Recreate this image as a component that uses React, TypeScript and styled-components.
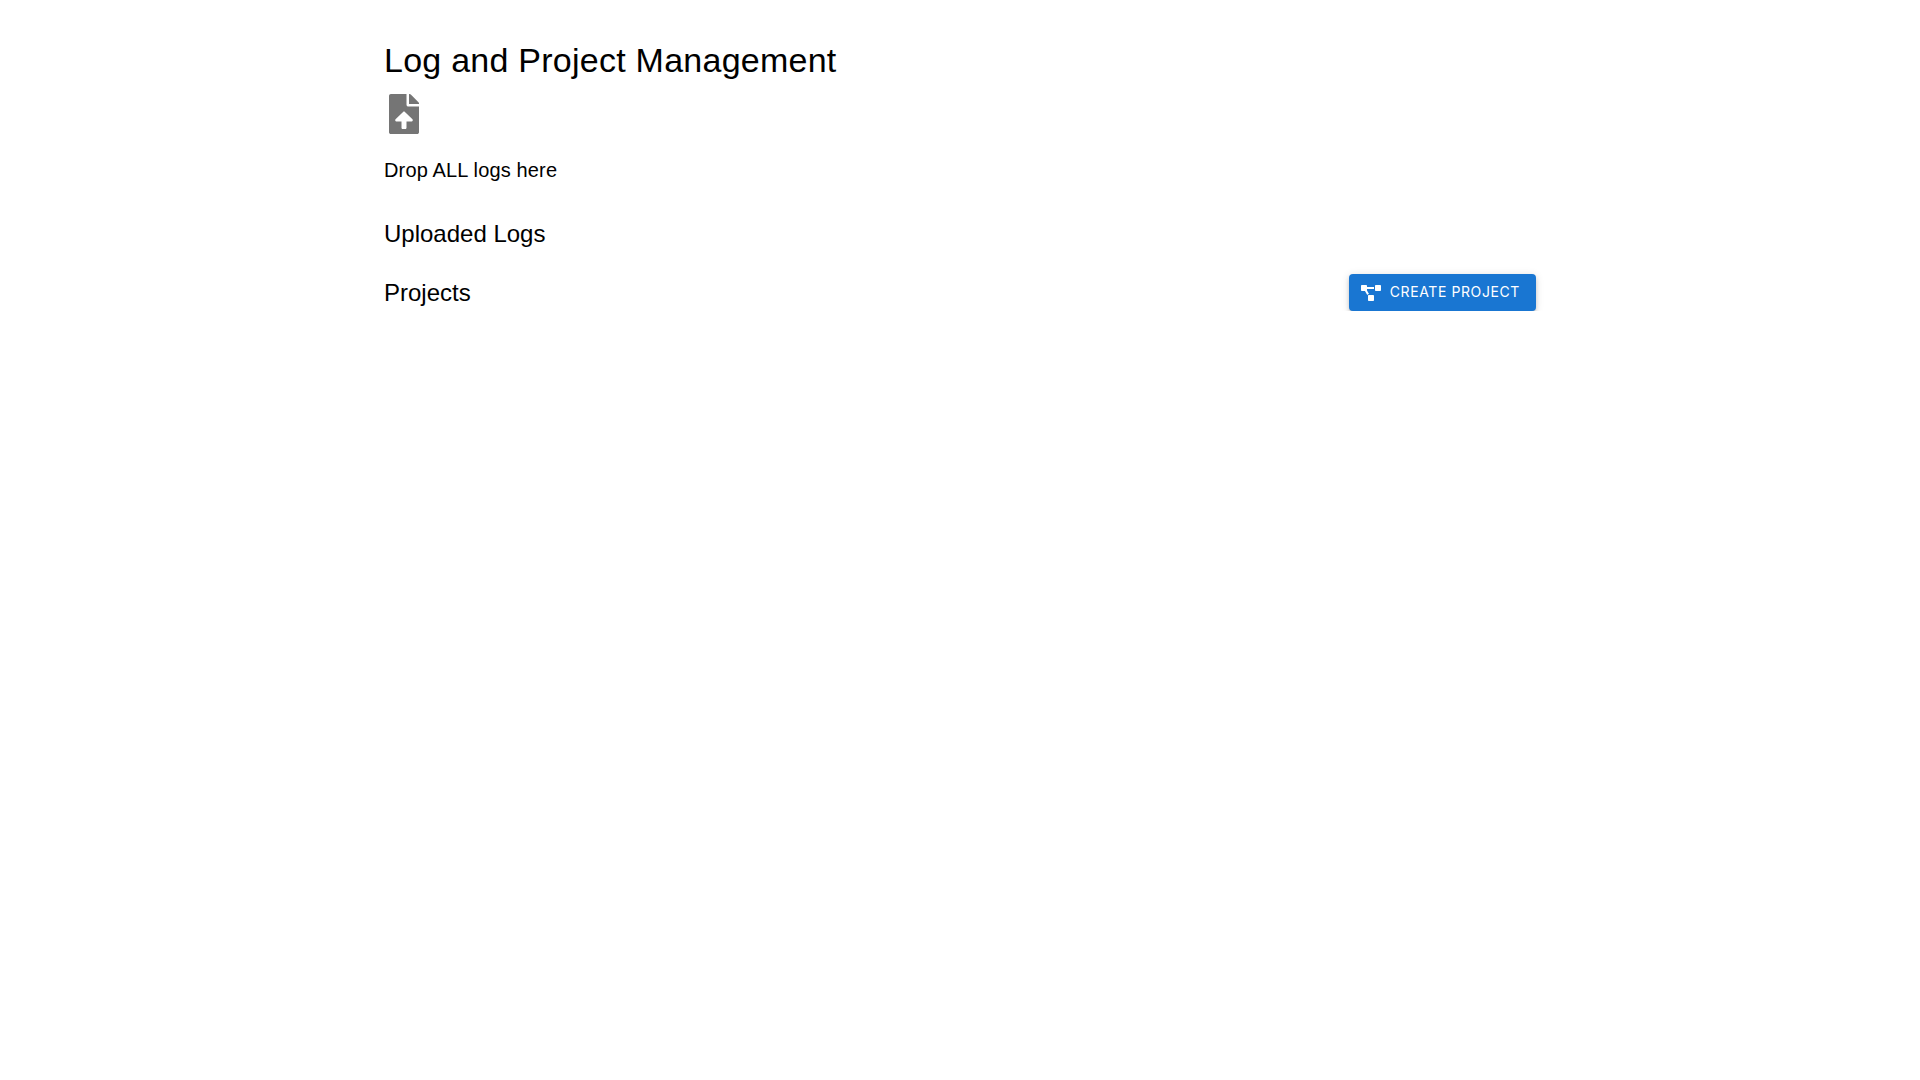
import styled, { createGlobalStyle } from "styled-components";
import { FaFileUpload, FaProjectDiagram } from "react-icons/fa";

const GlobalStyle = createGlobalStyle`
  body {
    margin: 0;
    background: #fff;
    font-family: "Liberation Sans", Arial, sans-serif;
    color: #000;
  }
`;

const Container = styled.main`
  box-sizing: border-box;
  width: 100%;
  max-width: 1200px;
  margin: 0 auto;
  padding: 40px 24px 0;
`;
const Title = styled.h1`
  margin: 0;
  font-size: 34px;
  line-height: 41px;
  font-weight: 400;
  letter-spacing: 0.25px;
`;
const DropZone = styled.section`
  padding: 13px 0 0;
`;
const DropIcon = styled(FaFileUpload)`
  display: block;
  width: 40px;
  height: 40px;
  color: #757575;
`;
const DropText = styled.p`
  margin: 22px 0 0;
  font-size: 20px;
  line-height: 28px;
  letter-spacing: 0.15px;
`;
const SectionTitle = styled.h2`
  margin: 0;
  font-size: 24px;
  line-height: 32px;
  font-weight: 400;
`;
const UploadedTitle = styled(SectionTitle)`
  margin-top: 34px;
`;
const ProjectsRow = styled.div`
  display: flex;
  align-items: center;
  justify-content: space-between;
  margin-top: 24px;
`;
const CreateButton = styled.button`
  display: inline-flex;
  align-items: center;
  gap: 9px;
  height: 37px;
  padding: 6px 16px 6px 12px;
  border: 0;
  border-radius: 4px;
  background: #1976d2;
  color: #fff;
  font-family: Inter, sans-serif;
  font-size: 14px;
  font-weight: 400;
  letter-spacing: 0.6px;
  text-transform: uppercase;
  box-shadow: 0 3px 3px -2px rgba(0, 0, 0, 0.2), 0 3px 4px 0 rgba(0, 0, 0, 0.14), 0 1px 8px 0 rgba(0, 0, 0, 0.12);
`;
const ButtonIcon = styled(FaProjectDiagram)`
  width: 20px;
  height: 20px;
`;
const ButtonLabel = styled.span`
  margin-bottom: 2px;
`;

export default function App() {
  return (
    <>
      <GlobalStyle />
      <Container>
        <Title>Log and Project Management</Title>
        <DropZone>
          <DropIcon />
          <DropText>Drop ALL logs here</DropText>
        </DropZone>
        <UploadedTitle>Uploaded Logs</UploadedTitle>
        <ProjectsRow>
          <SectionTitle>Projects</SectionTitle>
          <CreateButton>
            <ButtonIcon />
            <ButtonLabel>Create Project</ButtonLabel>
          </CreateButton>
        </ProjectsRow>
      </Container>
    </>
  );
}
